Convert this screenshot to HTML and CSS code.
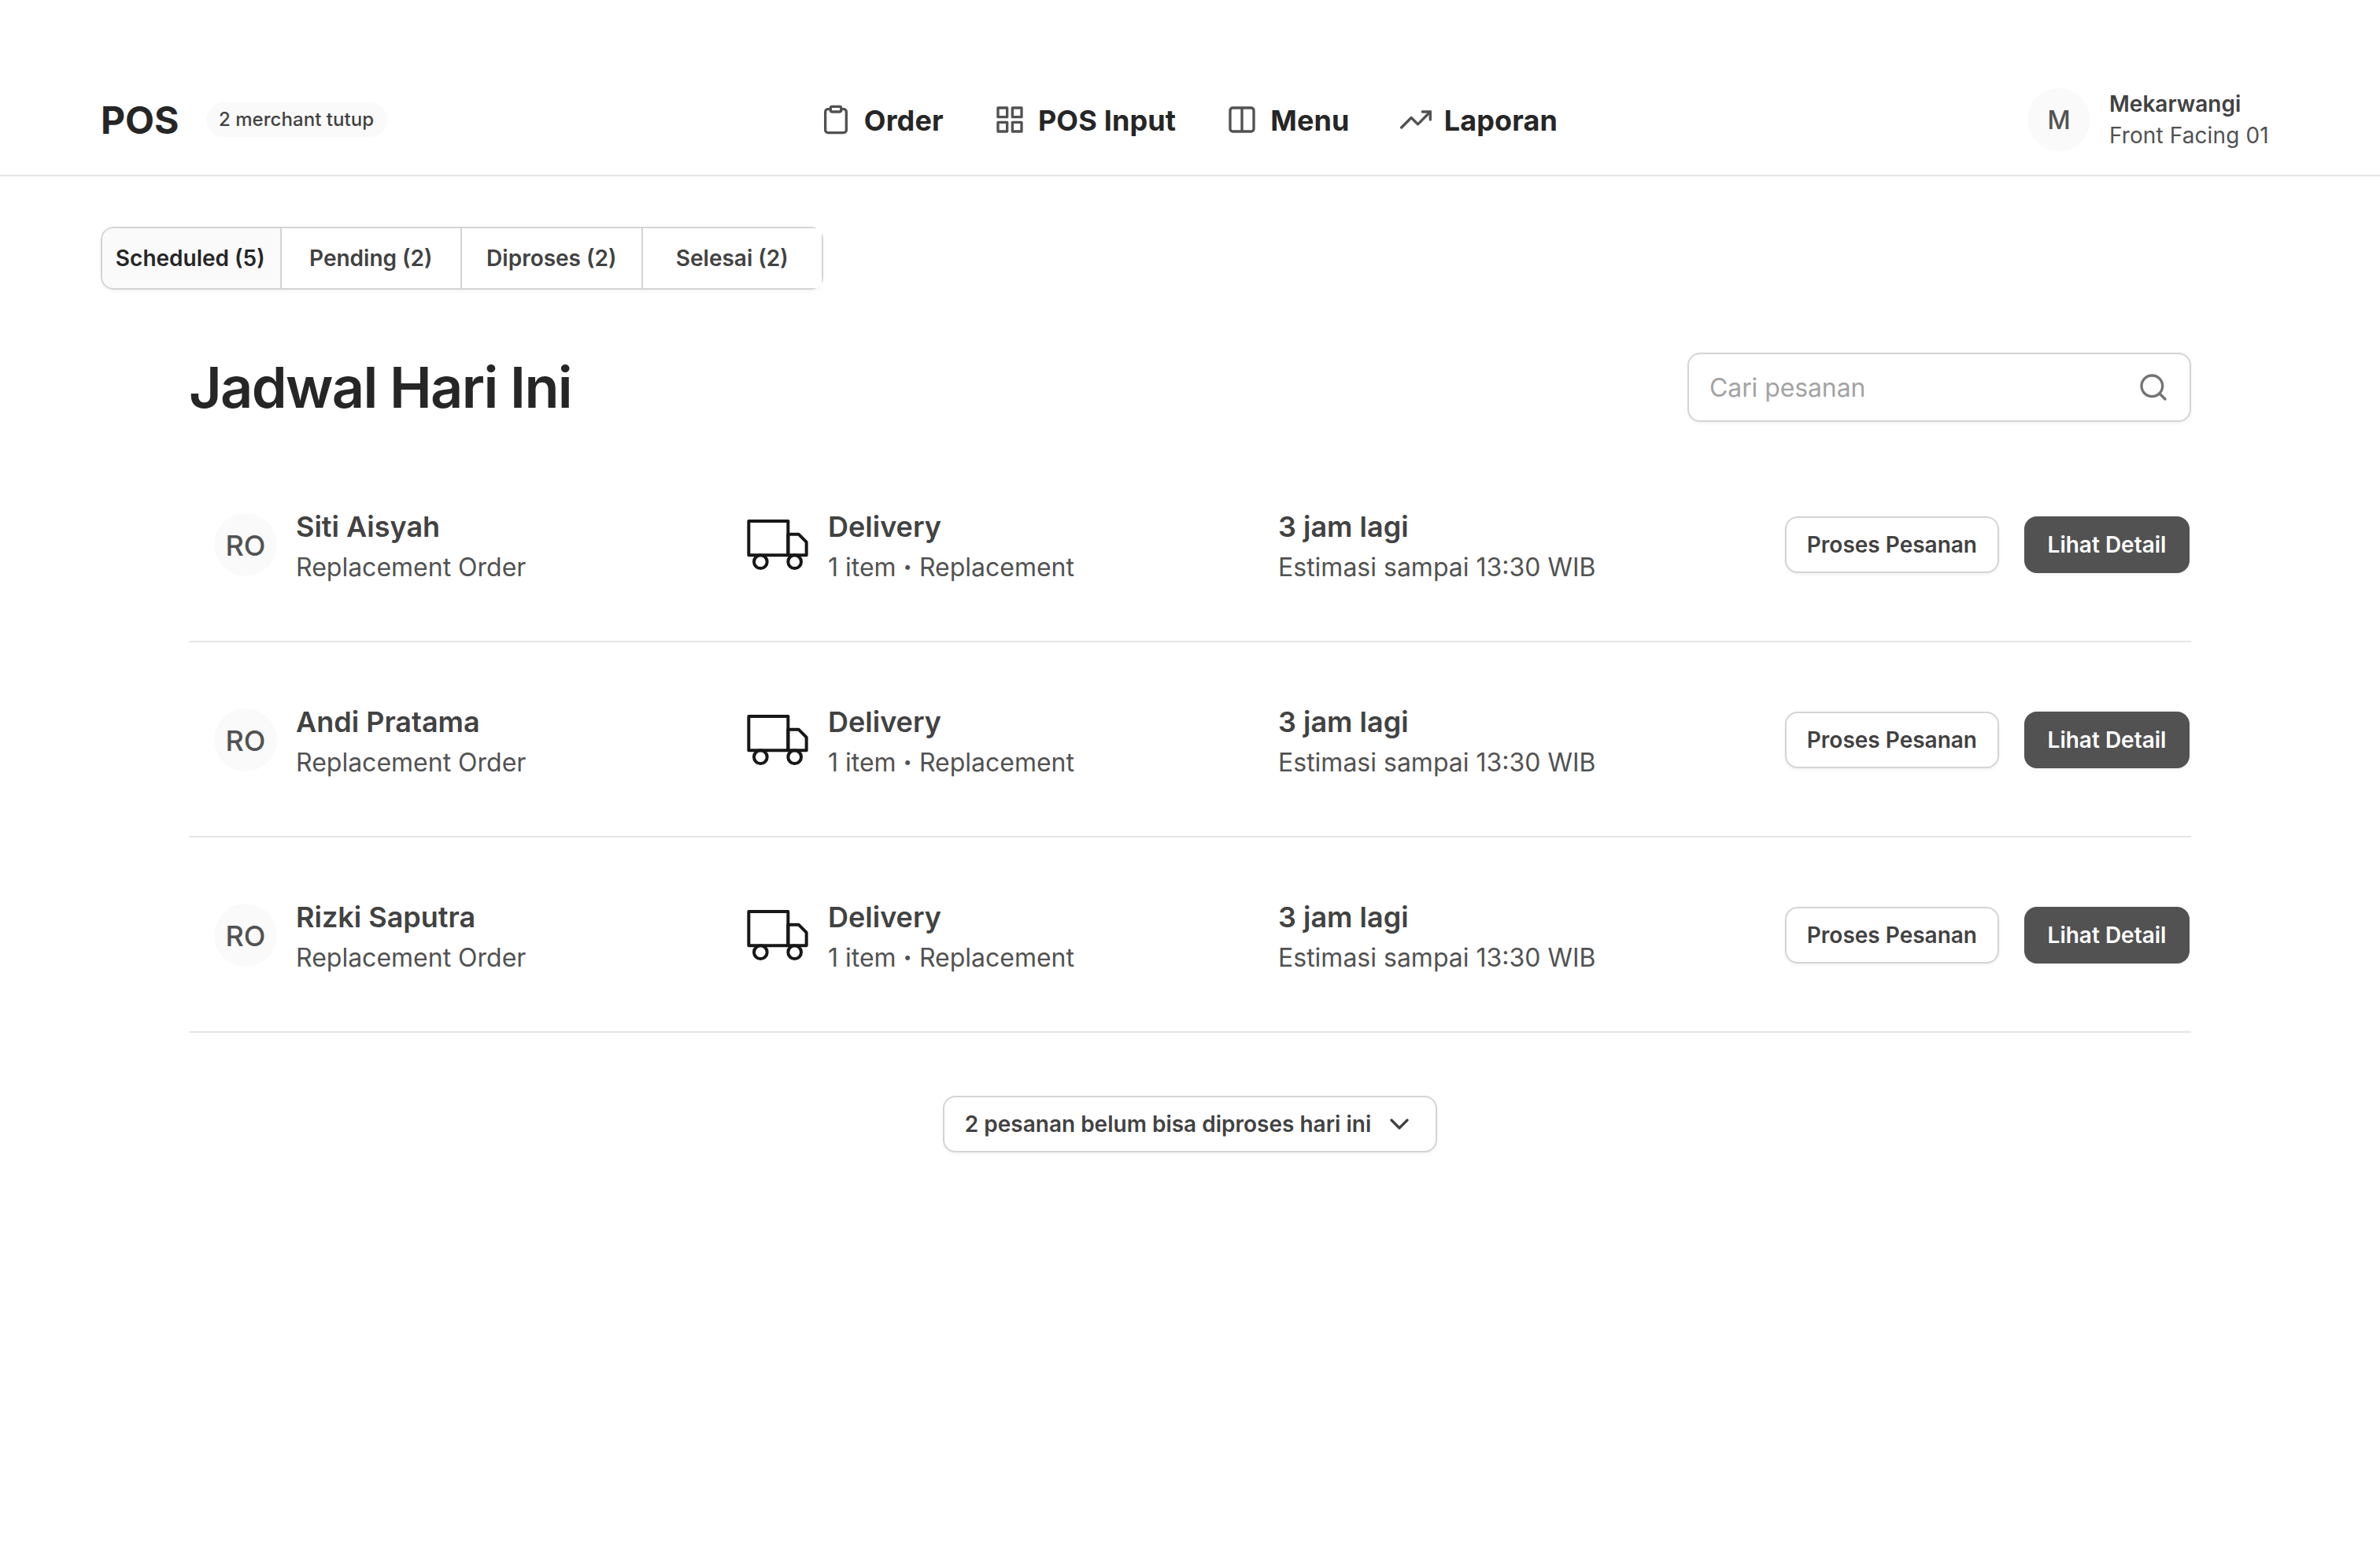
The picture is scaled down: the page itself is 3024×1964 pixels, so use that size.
FILE: index.html
```
<!DOCTYPE html>
<html lang="id">
<head>
    <meta charset="UTF-8">
    <meta name="viewport" content="width=device-width, initial-scale=1.0">
    <title>POS</title>
    <link rel="stylesheet" href="styles.css">
</head>

<body>
<!-- icons -->
<svg class="sprite" xmlns="http://www.w3.org/2000/svg">
    <symbol id="i-clipboard" viewBox="0 0 24 24">
        <path d="M16 4h2a2 2 0 0 1 2 2v14a2 2 0 0 1-2 2H6a2 2 0 0 1-2-2V6a2 2 0 0 1 2-2h2"/>
        <rect x="8" y="2" width="8" height="4" rx="1"/>
    </symbol>
    <symbol id="i-grid" viewBox="0 0 24 24">
        <rect x="3" y="3" width="7" height="7"/>
        <rect x="14" y="3" width="7" height="7"/>
        <rect x="14" y="14" width="7" height="7"/>
        <rect x="3" y="14" width="7" height="7"/>
    </symbol>
    <symbol id="i-columns" viewBox="0 0 24 24">
        <path d="M12 3h7a2 2 0 0 1 2 2v14a2 2 0 0 1-2 2h-7m0-18H5a2 2 0 0 0-2 2v14a2 2 0 0 0 2 2h7m0-18v18"/>
    </symbol>
    <symbol id="i-trending" viewBox="0 0 24 24">
        <path d="M23 6l-9.5 9.5-5-5L1 18"/>
        <path d="M17 6h6v6"/>
    </symbol>
    <symbol id="i-search" viewBox="0 0 24 24">
        <circle cx="11" cy="11" r="8"/>
        <path d="M21 21l-4.35-4.35"/>
    </symbol>
    <symbol id="i-chevron" viewBox="0 0 24 24">
        <path d="M6 9l6 6 6-6"/>
    </symbol>
    <symbol id="i-truck" viewBox="0 0 24 24">
        <rect x="1" y="3" width="15" height="13"/>
        <path d="M16 8h4l3 3v5h-7z"/>
        <circle cx="5.5" cy="18.5" r="2.5"/>
        <circle cx="18.5" cy="18.5" r="2.5"/>
    </symbol>
</svg>

<header class="header">
    <div class="brand">
        <span class="logo">POS</span>
        <span class="badge">2 merchant tutup</span>
    </div>
    <nav class="nav">
        <a class="nav-item"><svg class="icon"><use href="#i-clipboard"/></svg><span>Order</span></a>
        <a class="nav-item"><svg class="icon"><use href="#i-grid"/></svg><span>POS Input</span></a>
        <a class="nav-item"><svg class="icon"><use href="#i-columns"/></svg><span>Menu</span></a>
        <a class="nav-item"><svg class="icon"><use href="#i-trending"/></svg><span>Laporan</span></a>
    </nav>
    <div class="profile">
        <div class="avatar avatar-sm">M</div>
        <div class="profile-text">
            <div class="profile-name">Mekarwangi</div>
            <div class="profile-role">Front Facing 01</div>
        </div>
    </div>
</header>

<div class="tabs">
    <button class="tab active">Scheduled (5)</button>
    <button class="tab">Pending (2)</button>
    <button class="tab">Diproses (2)</button>
    <button class="tab">Selesai (2)</button>
</div>

<main class="content">
    <div class="content-head">
        <h1 class="title">Jadwal Hari Ini</h1>
        <div class="search">
            <input class="search-input" type="text" placeholder="Cari pesanan">
            <svg class="icon"><use href="#i-search"/></svg>
        </div>
    </div>

    <div class="row">
        <div class="cell">
            <div class="avatar">RO</div>
            <div class="cell-text">
                <div class="main-text">Siti Aisyah</div>
                <div class="sub-text">Replacement Order</div>
            </div>
        </div>
        <div class="cell">
            <svg class="truck"><use href="#i-truck"/></svg>
            <div class="cell-text">
                <div class="main-text">Delivery</div>
                <div class="sub-text">1 item <span class="dot">·</span> Replacement</div>
            </div>
        </div>
        <div class="cell">
            <div class="cell-text">
                <div class="main-text">3 jam lagi</div>
                <div class="sub-text">Estimasi sampai 13:30 WIB</div>
            </div>
        </div>
        <div class="actions">
            <button class="btn">Proses Pesanan</button>
            <button class="btn btn-dark">Lihat Detail</button>
        </div>
    </div>

    <div class="row">
        <div class="cell">
            <div class="avatar">RO</div>
            <div class="cell-text">
                <div class="main-text">Andi Pratama</div>
                <div class="sub-text">Replacement Order</div>
            </div>
        </div>
        <div class="cell">
            <svg class="truck"><use href="#i-truck"/></svg>
            <div class="cell-text">
                <div class="main-text">Delivery</div>
                <div class="sub-text">1 item <span class="dot">·</span> Replacement</div>
            </div>
        </div>
        <div class="cell">
            <div class="cell-text">
                <div class="main-text">3 jam lagi</div>
                <div class="sub-text">Estimasi sampai 13:30 WIB</div>
            </div>
        </div>
        <div class="actions">
            <button class="btn">Proses Pesanan</button>
            <button class="btn btn-dark">Lihat Detail</button>
        </div>
    </div>

    <div class="row">
        <div class="cell">
            <div class="avatar">RO</div>
            <div class="cell-text">
                <div class="main-text">Rizki Saputra</div>
                <div class="sub-text">Replacement Order</div>
            </div>
        </div>
        <div class="cell">
            <svg class="truck"><use href="#i-truck"/></svg>
            <div class="cell-text">
                <div class="main-text">Delivery</div>
                <div class="sub-text">1 item <span class="dot">·</span> Replacement</div>
            </div>
        </div>
        <div class="cell">
            <div class="cell-text">
                <div class="main-text">3 jam lagi</div>
                <div class="sub-text">Estimasi sampai 13:30 WIB</div>
            </div>
        </div>
        <div class="actions">
            <button class="btn">Proses Pesanan</button>
            <button class="btn btn-dark">Lihat Detail</button>
        </div>
    </div>

    <button class="btn more">2 pesanan belum bisa diproses hari ini<svg class="icon"><use href="#i-chevron"/></svg></button>
</main>
</body>
</html>
```
FILE: styles.css
```
* {
    box-sizing: border-box;
}

body {
    margin: 0;
    min-height: 100vh;
    background-color: #fff;
    color: #525252;
    font-family: Inter, "Liberation Sans", sans-serif;
    font-optical-sizing: none;
}

button, input {
    font-family: inherit;
    font-optical-sizing: none;
}

.sprite {
    display: none;
}

.icon {
    width: 40px;
    height: 40px;
    flex-shrink: 0;
    fill: none;
    stroke: currentColor;
    stroke-width: 2;
    stroke-linecap: round;
    stroke-linejoin: round;
}

/* header */
.header {
    display: grid;
    grid-template-columns: 1fr auto 1fr;
    align-items: center;
    height: 224px;
    padding: 82px 128px 0;
    border-bottom: 2px solid #e5e5e5;
}

.brand {
    display: flex;
    align-items: center;
    gap: 34px;
}

.logo {
    padding-top: 2px;
    color: #262626;
    font-size: 48px;
    line-height: 64px;
    font-weight: 700;
}

.badge {
    width: 230px;
    height: 44px;
    border-radius: 22px;
    background-color: #fafafa;
    color: #424242;
    font-size: 24px;
    line-height: 44px;
    font-weight: 500;
    letter-spacing: 0.05px;
    text-align: center;
}

.nav {
    display: flex;
    gap: 64px;
    margin-right: 3px;
}

.nav-item {
    display: flex;
    align-items: center;
    gap: 16px;
    color: #262626;
    font-size: 36px;
    line-height: 56px;
    font-weight: 700;
    letter-spacing: 0.15px;
}

.nav-item span {
    padding-top: 2px;
}

.nav-item .icon {
    color: #525252;
}

.profile {
    display: flex;
    align-items: center;
    justify-content: flex-end;
    gap: 24px;
}

.profile-text {
    width: 216px;
    font-size: 28px;
    line-height: 40px;
}

.profile-name {
    color: #424242;
    font-weight: 600;
}

.profile-role {
    letter-spacing: 0.1px;
}

.avatar {
    display: flex;
    align-items: center;
    justify-content: center;
    width: 80px;
    height: 80px;
    padding-top: 2px;
    border-radius: 50%;
    background-color: #fafafa;
    font-size: 36px;
    font-weight: 500;
}

.avatar-sm {
    padding-top: 0;
    font-size: 32px;
}

/* tabs */
.tabs {
    display: grid;
    grid-template-columns: repeat(4, 1fr);
    width: 918px;
    height: 80px;
    margin: 64px 0 0 128px;
    border-radius: 16px;
    overflow: hidden;
    box-shadow: 0 2px 4px rgba(10, 13, 18, 0.05);
}

.tab {
    min-width: 0;
    padding: 0;
    border: 2px solid #d4d4d4;
    border-left: 0;
    background-color: #fff;
    color: #424242;
    font-size: 28px;
    font-weight: 600;
    white-space: nowrap;
}

.tab.active {
    padding-right: 2px;
    border-left: 2px solid #d4d4d4;
    border-radius: 16px 0 0 16px;
    background-color: #fafafa;
    color: #262626;
}

/* content */
.content {
    display: flex;
    flex-direction: column;
    margin: 80px 240px 0;
}

.content-head {
    display: flex;
    align-items: center;
    justify-content: space-between;
    margin-bottom: 32px;
}

.title {
    margin: 0;
    color: #262626;
    font-size: 72px;
    line-height: 88px;
    font-weight: 600;
    letter-spacing: -1.65px;
}

.search {
    display: flex;
    align-items: center;
    width: 640px;
    height: 88px;
    padding: 0 26px;
    border: 2px solid #d4d4d4;
    border-radius: 16px;
    box-shadow: 0 2px 4px rgba(10, 13, 18, 0.05);
    color: #737373;
}

.search-input {
    flex: 1;
    min-width: 0;
    padding: 2px 0 0;
    border: 0;
    outline: 0;
    background: none;
    font-size: 32px;
    line-height: 48px;
    letter-spacing: -0.1px;
}

.search-input::placeholder {
    color: #a3a3a3;
}

.row {
    display: grid;
    grid-template-columns: 676px 676px 1fr auto;
    align-items: center;
    height: 248px;
    padding: 2px 2px 0 32px;
    border-bottom: 2px solid #e5e5e5;
}

.cell {
    display: flex;
    align-items: center;
    gap: 24px;
}

.cell-text {
    padding-top: 2px;
}

.main-text {
    color: #424242;
    font-size: 36px;
    line-height: 56px;
    font-weight: 600;
}

.sub-text {
    font-size: 32px;
    line-height: 48px;
}

.dot {
    font-weight: 800;
}

.truck {
    width: 80px;
    height: 80px;
    fill: none;
    stroke: #171717;
    stroke-width: 1.2;
    stroke-linecap: round;
    stroke-linejoin: round;
}

.actions {
    display: flex;
    gap: 32px;
}

.btn {
    display: flex;
    align-items: center;
    justify-content: center;
    gap: 16px;
    height: 72px;
    padding: 0 26px;
    border: 2px solid #d4d4d4;
    border-radius: 16px;
    background-color: #fff;
    box-shadow: 0 2px 4px rgba(10, 13, 18, 0.05);
    color: #424242;
    font-size: 28px;
    line-height: 40px;
    font-weight: 600;
}

.btn-dark {
    width: 210px;
    border-color: #525252;
    background-color: #525252;
    color: #fff;
}

.more {
    align-self: center;
    margin-top: 80px;
}
```
